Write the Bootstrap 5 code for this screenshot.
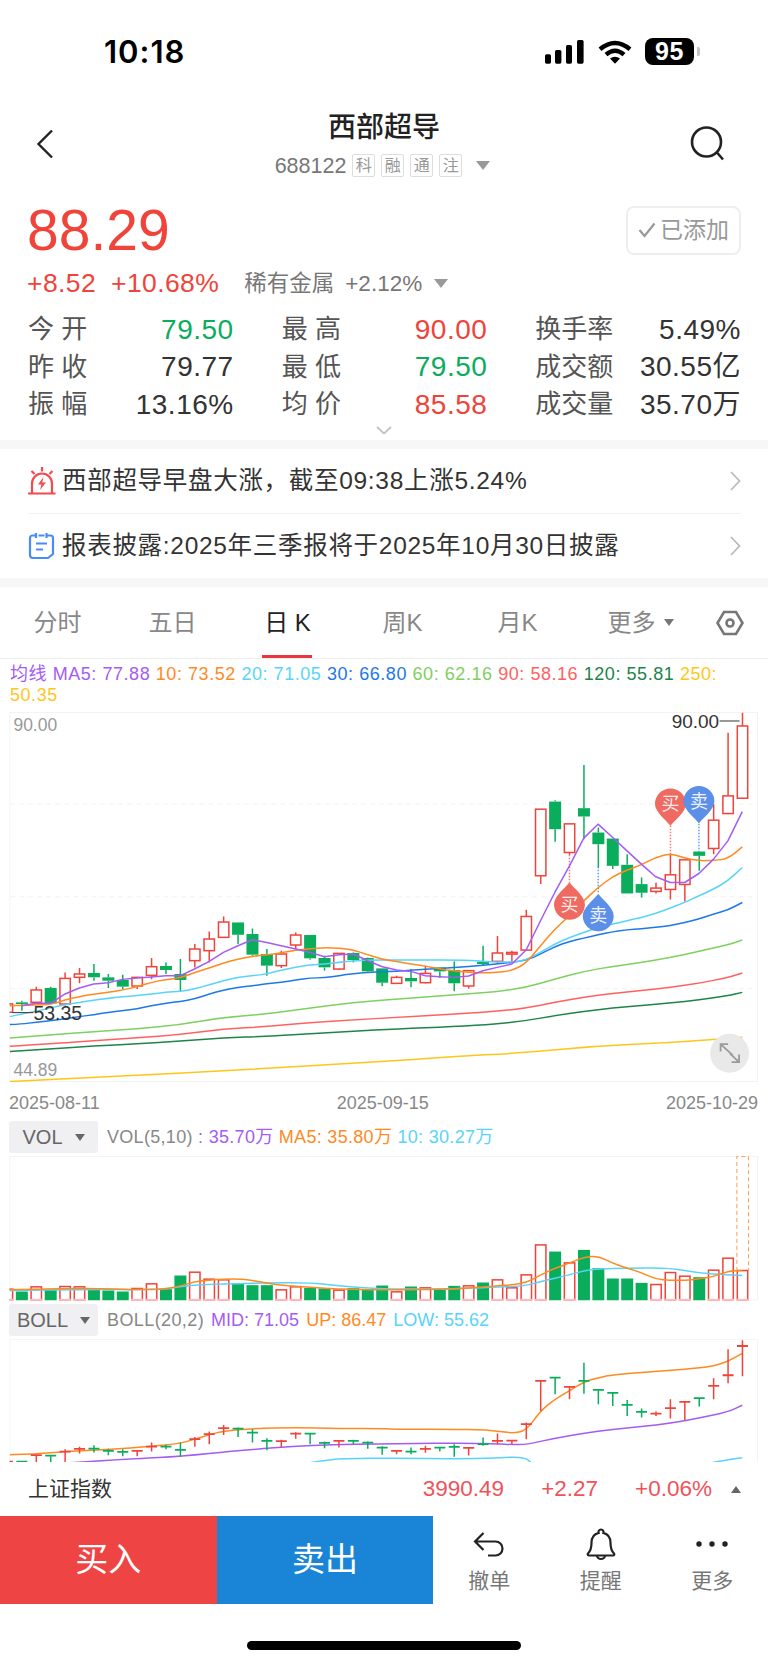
<!DOCTYPE html>
<html lang="zh-CN">
<head>
    <meta charset="UTF-8">
    <title>西部超导 688122</title>
    <link href="https://cdn.jsdelivr.net/npm/bootstrap@5.3.2/dist/css/bootstrap.min.css" rel="stylesheet">
    <style>
        html, body { margin: 0; background: #fff; }
        body { font-family: "Liberation Sans", "Noto Sans CJK SC", sans-serif; color: #333; }
        .screen { width: 768px; height: 1665px; overflow: hidden; background: #fff; }
        .tri-dn { width: 0; height: 0; border-left: 7px solid transparent; border-right: 7px solid transparent; border-top: 9px solid #999; }

        .status-bar { height: 104px; padding: 0 68px 0 104px; }
        .clock { font-family: "Inter", "Liberation Sans", sans-serif; font-size: 31px; font-weight: 600; color: #000; letter-spacing: 1px; }
        .wifi-icon { margin-left: 14px; }
        .batt { width: 49px; height: 27px; margin-left: 13px; border-radius: 8px; background: #000; color: #fff; font-size: 25px; font-weight: 700; letter-spacing: .5px; }
        .batt-nub { width: 3px; height: 9px; margin-left: 3px; border-radius: 0 2px 2px 0; background: #c4c4c4; }

        .top-head { height: 80px; }
        .head-side { width: 96px; }
        .back-icon { margin-left: 36px; }
        .search-icon { margin-right: 42px; }
        .stock-name { font-size: 28px; line-height: 36px; font-weight: 500; color: #222; }
        .stock-sub { height: 23px; margin-top: 8px; gap: 6px; padding-right: 3px; }
        .stock-code { font-size: 21.5px; color: #777; }
        .tag-box { width: 23px; height: 23px; border: 1px solid #ddd; border-radius: 2px; font-size: 16px; line-height: 21px; color: #999; text-align: center; }

        .price-row { padding: 22px 27px 0 27px; }
        .last-price { font-size: 57px; line-height: 49px; color: #f0433a; }
        .added-btn { width: 115px; height: 49px; padding: 0; gap: 4px; border: 2px solid #eee; border-radius: 8px; color: #999; font-size: 23px; }
        .change-row { height: 32px; margin-top: 13px; padding-left: 27px; font-size: 26.5px; letter-spacing: .4px; }
        .up-text { color: #f0433a; }
        .down-text { color: #0aad5c; }
        .pct-text { margin-left: 15px; }
        .sector { margin-left: 25px; font-size: 22.5px; color: #777; letter-spacing: 0; }
        .sector-pct { margin-left: 11px; }
        .sector-tri { margin-left: 12px; }

        .stats { margin-top: 11px; padding: 0 28px; gap: 49px; }
        .stat-col { width: 205px; }
        .stat-item { height: 37.5px; font-size: 28px; color: #333; letter-spacing: .5px; }
        .stat-item span:first-child { font-size: 26px; color: #555; letter-spacing: 0; }
        .stat-item span:last-child { margin-right: -1px; }
        .more-arrow { height: 17px; padding-bottom: 2px; }
        .gap-band { height: 9px; background: #f7f7f8; }

        .news-row { height: 64px; margin: 0 27px 0 28px; font-size: 24.5px; letter-spacing: .7px; color: #333; }
        .news-row + .news-row { height: 65px; border-top: 1px solid #f3f3f3; }
        .news-text { margin-left: 6px; }

        .ktabs { height: 72px; border-bottom: 1px solid #eee; }
        .ktab { width: 115px; font-size: 24px; color: #888; }
        .ktab-on { color: #222; }
        .ktab-on::after { content: ""; position: absolute; left: 32px; bottom: 0; width: 50px; height: 3px; background: #e8363a; }
        .ktab-more { padding-left: 16px; }
        .ktab-tri { border-width: 7px 5px 0; border-top-color: #777; }
        .hex-icon { margin-left: 26px; }
        .ma-legend { height: 53px; padding: 5px 0 0 10px; font-size: 18px; letter-spacing: .55px; line-height: 21.5px; white-space: nowrap; }
        .c-p { color: #a45cf4; } .c-o { color: #ff8a1f; } .c-c { color: #58d4fa; } .c-b { color: #1d78e8; }
        .c-g { color: #7ed061; } .c-r { color: #ff6161; } .c-d { color: #1e8449; } .c-y { color: #ffc61a; }
        .chart-svg { display: block; }
        .date-row { height: 39px; padding: 4px 10px 0 9px; font-size: 18px; color: #888; }
        .ind-row { height: 32px; margin: 0 0 3px 9px; font-size: 18px; gap: 9px; white-space: nowrap; }
        .ind-vol { letter-spacing: .3px; }
        .ind-boll .ind-name { letter-spacing: .4px; }
        .ind-boll span + span { margin-left: 2px; }
        .ind-btn { width: 89px; height: 32px; padding: 0; gap: 12px; background: #f0f0f2; border: 0; border-radius: 3px; font-size: 20px; color: #666; }
        .ind-tri { border-width: 7px 5px 0; border-top-color: #666; }
        .ind-gap { height: 3px; }
        .ind-name { color: #888; }

        .index-row { height: 54px; padding: 0 27px 0 28px; font-size: 21px; }
        .index-row .nums { gap: 37px; font-size: 22.5px; color: #f0525a; }
        .tri-up { width: 0; height: 0; margin-left: -18px; border-left: 5px solid transparent; border-right: 5px solid transparent; border-bottom: 7px solid #666; }
        .trade-btn { width: 217px; height: 88px; border: 0; border-radius: 0; color: #fff; font-size: 33px; }
        .trade-btn:hover { color: #fff; }
        .buy-btn, .buy-btn:hover { background: #ef4444; }
        .sell-btn, .sell-btn:hover { background: #1a85d6; }
        .tool-col { width: 111.670px; font-size: 21px; line-height: 26px; color: #777; }
        .tool-icon { height: 38px; margin: 9px 0 5px; }
        .home-wrap { height: 61px; padding-top: 37px; }
        .home-bar { width: 274px; height: 9px; border-radius: 5px; background: #000; }
    </style>
</head>
<body>

<div class="screen d-flex flex-column">

    <!-- status bar -->
    <div class="status-bar d-flex align-items-center justify-content-between">
        <div class="clock">10:18</div>
        <div class="d-flex align-items-center">
            <svg width="39" height="24" viewBox="0 0 39 24" fill="#000">
                <rect x="0" y="14.3" width="6" height="9.4" rx="1.6"/>
                <rect x="10" y="10" width="6.4" height="13.7" rx="1.6"/>
                <rect x="21" y="5" width="6" height="18.7" rx="1.6"/>
                <rect x="32" y="0" width="6.6" height="23.7" rx="1.6"/>
            </svg>
            <svg class="wifi-icon" width="34" height="24" viewBox="0 0 34 24">
                <path d="M2 9.2Q17-3.2 32 9.2" fill="none" stroke="#000" stroke-width="4.4"/>
                <path d="M8 14.6Q17 6.8 26 14.6" fill="none" stroke="#000" stroke-width="4.4"/>
                <path d="M12 18.6Q17 14.8 22 18.6L17 23.8Z" fill="#000"/>
            </svg>
            <div class="batt d-flex align-items-center justify-content-center">95</div>
            <div class="batt-nub"></div>
        </div>
    </div>

    <!-- title -->
    <div class="top-head d-flex align-items-center">
        <div class="head-side">
            <svg class="back-icon d-block" width="18" height="30" viewBox="0 0 18 30" fill="none" stroke="#222" stroke-width="2.4"><path d="M16 1.5L2.5 15 16 28.5"/></svg>
        </div>
        <div class="flex-grow-1 text-center">
            <div class="stock-name">西部超导</div>
            <div class="stock-sub d-flex align-items-center justify-content-center">
                <span class="stock-code">688122</span>
                <span class="tag-box">科</span>
                <span class="tag-box">融</span>
                <span class="tag-box">通</span>
                <span class="tag-box">注</span>
                <span class="tri-dn ms-2"></span>
            </div>
        </div>
        <div class="head-side d-flex justify-content-end">
            <svg class="search-icon" width="36" height="36" viewBox="0 0 36 36" fill="none" stroke="#222" stroke-width="2.6"><circle cx="16.5" cy="16" r="14.5"/><path d="M27 26.5l6 7"/></svg>
        </div>
    </div>

    <!-- price -->
    <div class="price-row d-flex align-items-center justify-content-between">
        <div class="last-price">88.29</div>
        <button type="button" class="btn added-btn d-flex align-items-center justify-content-center">
            <svg width="18" height="16" viewBox="0 0 18 16" fill="none" stroke="#999" stroke-width="2.2"><path d="M1.5 8l5 6L16.5 1.5"/></svg>
            <span>已添加</span>
        </button>
    </div>
    <div class="change-row d-flex align-items-center">
        <span class="up-text">+8.52</span>
        <span class="up-text pct-text">+10.68%</span>
        <span class="sector">稀有金属</span>
        <span class="sector sector-pct">+2.12%</span>
        <span class="tri-dn sector-tri"></span>
    </div>

    <!-- quote table -->
    <div class="stats d-flex">
        <div class="stat-col">
            <div class="stat-item d-flex align-items-center justify-content-between"><span>今 开</span><span class="down-text">79.50</span></div>
            <div class="stat-item d-flex align-items-center justify-content-between"><span>昨 收</span><span>79.77</span></div>
            <div class="stat-item d-flex align-items-center justify-content-between"><span>振 幅</span><span>13.16%</span></div>
        </div>
        <div class="stat-col">
            <div class="stat-item d-flex align-items-center justify-content-between"><span>最 高</span><span class="up-text">90.00</span></div>
            <div class="stat-item d-flex align-items-center justify-content-between"><span>最 低</span><span class="down-text">79.50</span></div>
            <div class="stat-item d-flex align-items-center justify-content-between"><span>均 价</span><span class="up-text">85.58</span></div>
        </div>
        <div class="stat-col">
            <div class="stat-item d-flex align-items-center justify-content-between"><span>换手率</span><span>5.49%</span></div>
            <div class="stat-item d-flex align-items-center justify-content-between"><span>成交额</span><span>30.55亿</span></div>
            <div class="stat-item d-flex align-items-center justify-content-between"><span>成交量</span><span>35.70万</span></div>
        </div>
    </div>
    <div class="more-arrow d-flex align-items-center justify-content-center">
        <svg width="16" height="9" viewBox="0 0 16 9" fill="none" stroke="#c4c4c4" stroke-width="1.8"><path d="M1 1l7 6.5L15 1"/></svg>
    </div>
    <div class="gap-band"></div>

    <!-- news -->
    <div class="news-row d-flex align-items-center">
        <svg width="28" height="28" viewBox="0 0 28 28" fill="none" stroke="#f4494e" stroke-width="2.2">
            <path d="M0 26.5H27.5M4 26V16.5a10 10 0 0 1 20 0V26M14 0v4.5M3.5 4l3 3M24.5 4l-3 3"/>
            <path d="M15.5 10l-5.5 7.5h3.5L12 23l6-7.5h-3.8z" fill="#f4494e" stroke="none"/>
        </svg>
        <span class="news-text flex-grow-1">西部超导早盘大涨，截至09:38上涨5.24%</span>
        <svg width="11" height="20" viewBox="0 0 11 20" fill="none" stroke="#bbb" stroke-width="1.8"><path d="M1 1l8.5 9L1 19"/></svg>
    </div>
    <div class="news-row d-flex align-items-center">
        <svg width="28" height="28" viewBox="0 0 28 28" fill="none" stroke="#4a8cf7" stroke-width="2.2">
            <path d="M7.5 3.5H4.5a2.5 2.5 0 0 0-2.5 2.5V23a3 3 0 0 0 3 3H20l5-4V6a2.5 2.5 0 0 0-2.5-2.5H19.500M10.500 3.500h6M8 1v5M18.500 1v5"/>
            <path d="M8 11.500h11M8 17.500h7"/>
        </svg>
        <span class="news-text flex-grow-1">报表披露:2025年三季报将于2025年10月30日披露</span>
        <svg width="11" height="20" viewBox="0 0 11 20" fill="none" stroke="#bbb" stroke-width="1.8"><path d="M1 1l8.5 9L1 19"/></svg>
    </div>
    <div class="gap-band"></div>

    <!-- period tabs -->
    <div class="ktabs d-flex align-items-center">
        <div class="ktab text-center">分时</div>
        <div class="ktab text-center">五日</div>
        <div class="ktab ktab-on text-center position-relative h-100 d-flex align-items-center justify-content-center">日 K</div>
        <div class="ktab text-center">周K</div>
        <div class="ktab text-center">月K</div>
        <div class="ktab ktab-more d-flex align-items-center justify-content-center">更多<span class="tri-dn ktab-tri ms-2"></span></div>
        <svg class="hex-icon" width="28" height="26" viewBox="0 0 28 26" fill="none" stroke="#777" stroke-width="2.6"><path d="M8 2H20L26.500 13 20 24H8L1.500 13Z"/><circle cx="14" cy="13" r="3.500"/></svg>
    </div>
    <div class="ma-legend">
        <span class="c-p">均线 MA5: 77.88</span>
        <span class="c-o">10: 73.52</span>
        <span class="c-c">20: 71.05</span>
        <span class="c-b">30: 66.80</span>
        <span class="c-g">60: 62.16</span>
        <span class="c-r">90: 58.16</span>
        <span class="c-d">120: 55.81</span>
        <span class="c-y">250:</span><br>
        <span class="c-y">50.35</span>
    </div>

    <!-- charts, drawn from the arrays below -->
    <svg id="klineChart" class="chart-svg" width="768" height="371" viewBox="0 711 768 371"></svg>
    <div class="date-row d-flex align-items-center justify-content-between">
        <span>2025-08-11</span><span>2025-09-15</span><span>2025-10-29</span>
    </div>
    <div class="ind-row d-flex align-items-center">
        <button type="button" class="btn ind-btn d-flex align-items-center justify-content-center">VOL<span class="tri-dn ind-tri"></span></button>
        <span class="ind-vol"><span class="ind-name">VOL(5,10)</span>&nbsp;<span class="c-p">: 35.70万</span> <span class="c-o">MA5: 35.80万</span> <span class="c-c">10: 30.27万</span></span>
    </div>
    <svg id="volChart" class="chart-svg" width="768" height="145" viewBox="0 1156 768 145"></svg>
    <div class="ind-gap"></div>
    <div class="ind-row d-flex align-items-center">
        <button type="button" class="btn ind-btn d-flex align-items-center justify-content-center">BOLL<span class="tri-dn ind-tri"></span></button>
        <span class="ind-boll"><span class="ind-name">BOLL(20,2)</span> <span class="c-p">MID: 71.05</span> <span class="c-o">UP: 86.47</span> <span class="c-c">LOW: 55.62</span></span>
    </div>
    <svg id="bollChart" class="chart-svg" width="768" height="123" viewBox="0 1338 768 123"></svg>

    <!-- index ticker -->
    <div class="index-row d-flex align-items-center justify-content-between">
        <span>上证指数</span>
        <div class="nums d-flex align-items-center">
            <span>3990.49</span><span>+2.27</span><span>+0.06%</span><span class="tri-up"></span>
        </div>
    </div>

    <!-- trade bar -->
    <div class="d-flex">
        <button type="button" class="btn trade-btn buy-btn">买入</button>
        <button type="button" class="btn trade-btn sell-btn">卖出</button>
        <div class="tool-col d-flex flex-column align-items-center">
            <div class="tool-icon d-flex align-items-center">
                <svg width="32" height="26" viewBox="0 0 32 26" fill="none" stroke="#222" stroke-width="2.2"><path d="M10.500 2L2 10.500 10.500 19M2 10.500H22.500a7 7 0 0 1 0 14H15"/></svg>
            </div>撤单
        </div>
        <div class="tool-col d-flex flex-column align-items-center">
            <div class="tool-icon d-flex align-items-center">
                <svg width="30" height="33" viewBox="0 0 30 33" fill="none" stroke="#222" stroke-width="2.2"><path d="M15 1.500a2.500 2.500 0 0 1 2.400 3.400C22 6 24.500 10 24.500 15c0 5 .5 7.500 3.500 10.500.7.800.2 2-1 2H3c-1.200 0-1.700-1.200-1-2C5 22.500 5.500 20 5.500 15c0-5 2.500-9 7.100-10.100A2.500 2.500 0 0 1 15 1.500z"/><path d="M11 27.500a4 3.500 0 0 0 8 0"/></svg>
            </div>提醒
        </div>
        <div class="tool-col d-flex flex-column align-items-center">
            <div class="tool-icon d-flex align-items-center">
                <svg width="32" height="6" viewBox="0 0 32 6" fill="#222"><circle cx="3" cy="3" r="2.700"/><circle cx="16" cy="3" r="2.700"/><circle cx="29" cy="3" r="2.700"/></svg>
            </div>更多
        </div>
    </div>

    <div class="home-wrap d-flex justify-content-center">
        <div class="home-bar"></div>
    </div>
</div>

<script src="https://cdn.jsdelivr.net/npm/bootstrap@5.3.2/dist/js/bootstrap.bundle.min.js"></script>
<script>
    const RED = "#f0433a", GREEN = "#0aad5c";
    const PURPLE = "#a45cf4", ORANGE = "#ff8a1f", CYAN = "#58d4fa", BLUE = "#1d78e8";
    const LIME = "#7ed061", ROSE = "#ff6161", DARK = "#1e8449", YELLOW = "#ffc61a";

    // candle x position by index
    const cx = i => 7 + 14.43 * i;

    // up, bodyTop, bodyBottom, wickTop, wickBottom  (y = 700 + v/3)
    const kline = [
        [1,910,935,905,938],[0,905,910,900,930],[1,868,905,858,910],[0,862,908,858,908],[1,833,910,815,915],
        [1,820,830,802,848],[0,817,830,790,840],[0,830,840,820,862],[0,838,858,822,866],[1,830,856,828,865],
        [1,798,824,772,836],[0,796,808,785,820],[0,820,838,775,873],[1,745,780,730,800],[1,715,750,692,785],
        [1,664,710,647,712],[0,665,702,665,730],[0,700,762,683,765],[0,760,795,745,825],[1,760,795,750,802],
        [1,703,733,695,745],[0,703,773,703,777],[0,772,800,765,810],[1,758,805,758,808],[0,757,778,755,785],
        [0,772,812,770,815],[0,803,846,803,857],[1,830,848,825,850],[0,832,842,805,860],[1,818,846,795,848],
        [0,800,812,800,832],[0,808,848,782,872],[1,810,856,810,864],[0,783,790,735,795],[1,757,782,706,790],
        [1,755,760,750,785],[1,647,748,627,750],[1,325,525,325,550],[0,302,385,298,423],[1,369,455,369,462],
        [0,322,347,192,415],[0,395,430,380,500],[0,413,495,413,505],[0,492,578,460,578],[0,550,576,530,590],
        [1,562,572,546,578],[1,522,566,458,596],[1,477,551,477,602],[0,452,465,452,510],[1,358,443,310,460],
        [1,285,338,95,340],[1,75,292,35,75]
    ];

    // line traces, left half x = v/3, right half x = 400 + v/3
    const maLines = [
        [YELLOW, [[28,1143],[280,1130],[540,1118],[800,1103],[1060,1088]], [[0,1080],[162,1068],[379,1056],[595,1036],[812,1026],[1028,1010]]],
        [DARK, [[28,1053],[151,1045],[280,1036],[410,1030],[540,1022],[670,1012],[800,1007],[930,1000],[1060,992],[1190,985]], [[162,978],[292,970],[379,960],[465,945],[552,932],[639,922],[725,915],[812,907],[898,898],[985,885],[1028,875]]],
        [ROSE, [[28,1037],[151,1030],[280,1020],[410,1012],[540,1002],[670,985],[800,978],[930,966],[1060,958],[1190,950]], [[162,940],[292,932],[379,922],[465,905],[552,890],[639,878],[725,870],[812,860],[898,848],[985,830],[1028,817]]],
        [LIME, [[28,1012],[151,1003],[280,993],[410,985],[540,972],[670,950],[800,940],[930,922],[1060,905],[1190,895]], [[162,883],[292,873],[379,860],[465,835],[552,812],[639,797],[725,785],[812,770],[898,752],[985,732],[1028,718]]],
        [BLUE, [[28,972],[64,970],[107,965],[151,960],[194,955],[237,948],[280,942],[323,935],[367,930],[410,925],[453,915],[497,908],[540,902],[583,895],[627,880],[670,868],[713,860],[757,855],[800,849],[843,845],[887,838],[930,832],[973,831],[1017,825],[1060,818],[1103,815],[1147,813],[1190,812]], [[33,808],[119,803],[206,797],[292,790],[379,780],[422,760],[465,738],[509,722],[552,712],[595,702],[639,693],[682,687],[725,684],[768,680],[812,675],[855,665],[898,655],[942,640],[985,628],[1028,605]]],
        [CYAN, [[28,948],[64,940],[107,932],[151,922],[194,912],[237,905],[280,898],[323,893],[367,888],[410,885],[453,880],[497,875],[540,872],[583,865],[627,852],[670,840],[713,830],[757,825],[800,820],[843,808],[887,800],[930,792],[973,790],[1017,785],[1060,780],[1103,778],[1190,778]], [[33,778],[206,778],[249,782],[336,785],[379,778],[422,755],[465,730],[509,710],[552,695],[595,680],[639,670],[682,660],[725,650],[768,638],[812,622],[855,605],[898,585],[942,565],[985,540],[1028,500]]],
        [ORANGE, [[28,915],[107,912],[151,912],[194,898],[237,888],[280,880],[323,875],[367,868],[410,858],[453,845],[497,836],[540,832],[583,815],[627,802],[670,787],[713,775],[757,767],[800,762],[843,757],[887,748],[930,744],[973,741],[1017,742],[1060,748],[1103,762],[1147,776],[1190,782]], [[33,790],[76,796],[119,805],[162,810],[206,815],[249,817],[292,815],[336,810],[379,788],[422,735],[465,685],[509,645],[552,600],[595,560],[639,527],[682,508],[725,492],[768,470],[812,458],[855,472],[898,480],[942,479],[985,474],[1028,438]]],
        [PURPLE, [[64,915],[107,908],[151,908],[194,880],[237,862],[280,850],[323,846],[367,836],[410,832],[453,829],[497,825],[540,825],[583,805],[627,782],[670,755],[713,735],[757,717],[800,725],[843,735],[887,745],[930,755],[973,768],[1017,762],[1060,760],[1103,780],[1147,798],[1190,808]], [[33,812],[76,825],[119,828],[162,830],[206,826],[249,810],[292,800],[336,790],[379,748],[422,660],[465,575],[509,495],[552,412],[595,370],[639,410],[682,450],[725,490],[768,528],[812,545],[855,545],[898,518],[942,475],[985,420],[1028,332]]]
    ];

    const volTops = [568,575,561,570,560,561,570,572,575,566,552,568,527,517,538,540,552,556,556,570,561,564,566,571,565,570,557,576,560,564,570,558,558,548,540,564,525,435,455,489,450,505,536,536,549,554,518,529,532,511,475,512];
    const volLines = [
        [CYAN, [[28,572],[280,568],[410,570],[497,567],[540,560],[627,553],[713,552],[800,549],[930,549],[1017,558],[1103,565]], [[0,568],[162,567],[292,562],[379,558],[422,545],[509,525],[552,513],[595,507],[682,505],[812,504],[898,520],[985,525],[1028,527]]],
        [ORANGE, [[20,570],[151,567],[280,565],[410,570],[497,568],[540,558],[583,546],[627,540],[713,536],[757,542],[800,550],[843,556],[930,563],[1017,567],[1103,570]], [[0,570],[119,568],[206,565],[292,558],[336,555],[379,549],[422,525],[465,505],[509,490],[552,472],[595,468],[639,490],[682,505],[725,518],[768,538],[812,541],[855,541],[898,538],[942,530],[985,514],[1028,512]]]
    ];

    // body y, wickTop, wickBottom  (y = 1100 + v/3)
    const boll = [
        [1082,1082,1090],[1082,1082,1088],[1063,1063,1088],[1064,1064,1085],[1052,1045,1085],[1044,1038,1058],[1043,1033,1055],[1050,1044,1063],[1053,1045,1066],[1050,1048,1066],
        [1037,1025,1052],[1037,1032,1045],[1047,1025,1068],[1015,1008,1038],[1000,992,1030],[982,972,1002],[983,980,1008],[995,985,1025],[1020,1012,1048],[1021,1017,1040],
        [998,994,1014],[998,996,1030],[1026,1022,1042],[1020,1018,1040],[1020,1017,1030],[1025,1022,1044],[1040,1036,1062],[1050,1048,1060],[1052,1040,1060],[1044,1035,1056],
        [1040,1040,1052],[1038,1030,1068],[1041,1041,1064],[1030,1010,1035],[1020,998,1030],[1019,1018,1030],[970,965,1015],[840,840,930],[830,830,880],[858,858,895],
        [840,785,878],[867,865,910],[876,875,915],[912,897,945],[933,923,950],[938,932,945],[922,895,953],[903,903,958],[892,892,917],[855,832,895],[823,745,847],[735,718,826]
    ];
    const bollLines = [
        [CYAN, [[915,1088],[960,1080],[1030,1073]], [[0,1072],[162,1074],[292,1072],[336,1068],[379,1072],[395,1087]]],
        [CYAN, [], [[930,1087],[985,1076],[1028,1071]]],
        [PURPLE, [[190,1087],[410,1073],[540,1067],[713,1049],[930,1033]], [[0,1028],[206,1027],[292,1029],[336,1031],[379,1031],[465,1012],[552,997],[639,985],[725,977],[812,967],[898,952],[985,933],[1028,913]]],
        [ORANGE, [[28,1062],[107,1060],[194,1052],[323,1046],[410,1040],[540,1028],[583,1015],[627,1002],[670,990],[757,983],[887,980],[1017,983],[1147,983]], [[0,985],[162,985],[249,987],[292,990],[336,997],[379,990],[422,930],[465,895],[509,870],[552,843],[595,830],[639,821],[812,808],[898,801],[942,795],[985,782],[1028,757]]]
    ];

    function tracePath(line, base, sharp) {
        const left = line[1].map(p => [p[0] / 3, base + p[1] / 3]);
        const right = line[2].map(p => [400 + p[0] / 3, base + p[1] / 3]);
        const pts = left.concat(right);
        let d = "M" + pts[0][0].toFixed(1) + " " + pts[0][1].toFixed(1);
        for (let i = 1; i < pts.length - 1; i++) {
            if (sharp) {
                d += "L" + pts[i][0].toFixed(1) + " " + pts[i][1].toFixed(1);
            } else {
                // round the corner through the midpoint of the next segment
                const mx = (pts[i][0] + pts[i + 1][0]) / 2, my = (pts[i][1] + pts[i + 1][1]) / 2;
                d += "Q" + pts[i][0].toFixed(1) + " " + pts[i][1].toFixed(1) + " " + mx.toFixed(1) + " " + my.toFixed(1);
            }
        }
        const last = pts[pts.length - 1];
        d += "L" + last[0].toFixed(1) + " " + last[1].toFixed(1);
        return `<path d="${d}" fill="none" stroke="${line[0]}" stroke-width="1.500" stroke-linejoin="round"/>`;
    }

    function frame(top, bottom) {
        return `<rect x="9.5" y="${top}" width="748.5" height="${bottom - top}" fill="none" stroke="#f3f3f3"/>`;
    }

    function pin(x, y, tipUp, color, label) {
        const t = tipUp ? -22 : 22, c = tipUp ? -8 : 8, sweep = tipUp ? 1 : 0;
        const d = `M0,${t}C4,${t * 0.75} 15.5,${c} 15.5,0A15.5,15.5 0 1 ${sweep} -15.5,0C-15.5,${c} -4,${t * 0.75} 0,${t}Z`;
        return `<g transform="translate(${x},${y})"><path d="${d}" fill="${color}"/>` +
            `<text y="6.500" text-anchor="middle" font-size="18" fill="#fff" fill-opacity=".9" font-family="Noto Sans CJK SC">${label}</text></g>`;
    }

    function dotted(x, y1, y2, color) {
        return `<line x1="${x}" x2="${x}" y1="${y1}" y2="${y2}" stroke="${color}" stroke-opacity=".7" stroke-width="1.500" stroke-dasharray="1.500 1.500"/>`;
    }

    function drawKline() {
        let s = `<defs><clipPath id="kClip"><rect x="9" y="711" width="750" height="371"/></clipPath></defs>`;
        s += frame(711.5, 1081);
        [803, 896, 988].forEach(y => {
            s += `<line x1="10" x2="758" y1="${y}" y2="${y}" stroke="#f2f2f2" stroke-dasharray="5 4"/>`;
        });
        s += `<text x="13" y="730" font-size="17.500" fill="#999">90.00</text>`;
        s += `<text x="13" y="1075" font-size="17.500" fill="#999">44.89</text>`;
        s += `<g clip-path="url(#kClip)">`;
        // dotted lines from marked candles to their pins
        s += dotted(569.7, 854, 882, RED) + dotted(598.5, 866, 893, BLUE);
        s += dotted(670.8, 825, 853, RED) + dotted(699.3, 823, 851, BLUE);
        kline.forEach((k, i) => {
            const x = cx(i), col = k[0] ? RED : GREEN;
            const y = v => (700 + v / 3).toFixed(1);
            s += `<line x1="${x}" x2="${x}" y1="${y(k[3])}" y2="${y(k[1])}" stroke="${col}" stroke-width="1.500"/>`;
            s += `<line x1="${x}" x2="${x}" y1="${y(k[2])}" y2="${y(k[4])}" stroke="${col}" stroke-width="1.500"/>`;
            if (k[0]) {
                s += `<rect x="${x - 5.2}" y="${y(k[1])}" width="10.400" height="${(k[2] - k[1]) / 3}" fill="#fff" stroke="${col}" stroke-width="1.500"/>`;
            } else {
                s += `<rect x="${x - 6}" y="${y(k[1])}" width="12" height="${(k[2] - k[1]) / 3}" fill="${col}"/>`;
            }
        });
        maLines.forEach(l => { s += tracePath(l, 700, l[0] === PURPLE); });
        s += `</g>`;
        s += `<line x1="12" x2="33" y1="1012" y2="1012" stroke="#333"/>`;
        s += `<text x="33" y="1019.500" font-size="19.500" fill="#333">53.35</text>`;
        s += `<line x1="720" x2="740" y1="720" y2="720" stroke="#333"/>`;
        s += `<text x="672" y="727" font-size="19" fill="#333">90.00</text>`;
        s += pin(569.7, 903.5, true, "#ef6a60", "买");
        s += pin(598.5, 915, true, "#5b8fe8", "卖");
        s += pin(670.8, 803, false, "#ef6a60", "买");
        s += pin(699.3, 800.5, false, "#5b8fe8", "卖");
        // expand button
        s += `<circle cx="730" cy="1052.700" r="19.500" fill="#e9e9e9"/>`;
        s += `<path d="M721 1043.500l12 11M721 1051v-7.500h7.500M739.500 1061.500l-9-8.500M739.500 1054v7.500H732" fill="none" stroke="#9a9a9a" stroke-width="1.800"/>`;
        document.getElementById("klineChart").innerHTML = s;
    }

    function drawVol() {
        let s = frame(1156.5, 1300);
        s += `<defs><clipPath id="vClip"><rect x="9" y="1156" width="750" height="145"/></clipPath></defs><g clip-path="url(#vClip)">`;
        volTops.forEach((v, i) => {
            const x = cx(i), top = 1100 + v / 3;
            if (kline[i][0]) {
                s += `<rect x="${x - 5.2}" y="${top}" width="10.400" height="${1300 - top}" fill="#fff" stroke="${RED}" stroke-width="1.500"/>`;
                s += `<rect x="${x - 6}" y="1299" width="12" height="2" fill="#fbb"/>`;
            } else {
                s += `<rect x="${x - 6}" y="${top}" width="12" height="${1300.5 - top}" fill="${GREEN}"/>`;
            }
        });
        volLines.forEach(l => { s += tracePath(l, 1100); });
        s += `</g>`;
        // highlighted last session
        s += `<path d="M737.300 1271V1156.500H749V1271" fill="none" stroke="#ff9a4d" stroke-dasharray="4 3"/>`;
        document.getElementById("volChart").innerHTML = s;
    }

    function drawBoll() {
        let s = `<defs><clipPath id="bClip"><rect x="9" y="1338" width="750" height="124"/></clipPath></defs>`;
        s += `<path d="M9.500 1462V1338.500H758V1462" fill="none" stroke="#f5f5f5"/><g clip-path="url(#bClip)">`;
        bollLines.forEach(l => { s += tracePath(l, 1100); });
        boll.forEach((b, i) => {
            const x = cx(i), col = kline[i][0] ? RED : GREEN;
            const y = v => (1100 + v / 3).toFixed(1);
            s += `<line x1="${x}" x2="${x}" y1="${y(b[1])}" y2="${y(b[2])}" stroke="${col}" stroke-width="1.500"/>`;
            s += `<line x1="${x - 5.500}" x2="${x + 5.500}" y1="${y(b[0])}" y2="${y(b[0])}" stroke="${col}" stroke-width="1.800"/>`;
        });
        s += `</g>`;
        document.getElementById("bollChart").innerHTML = s;
    }

    drawKline();
    drawVol();
    drawBoll();
</script>

</body>
</html>
